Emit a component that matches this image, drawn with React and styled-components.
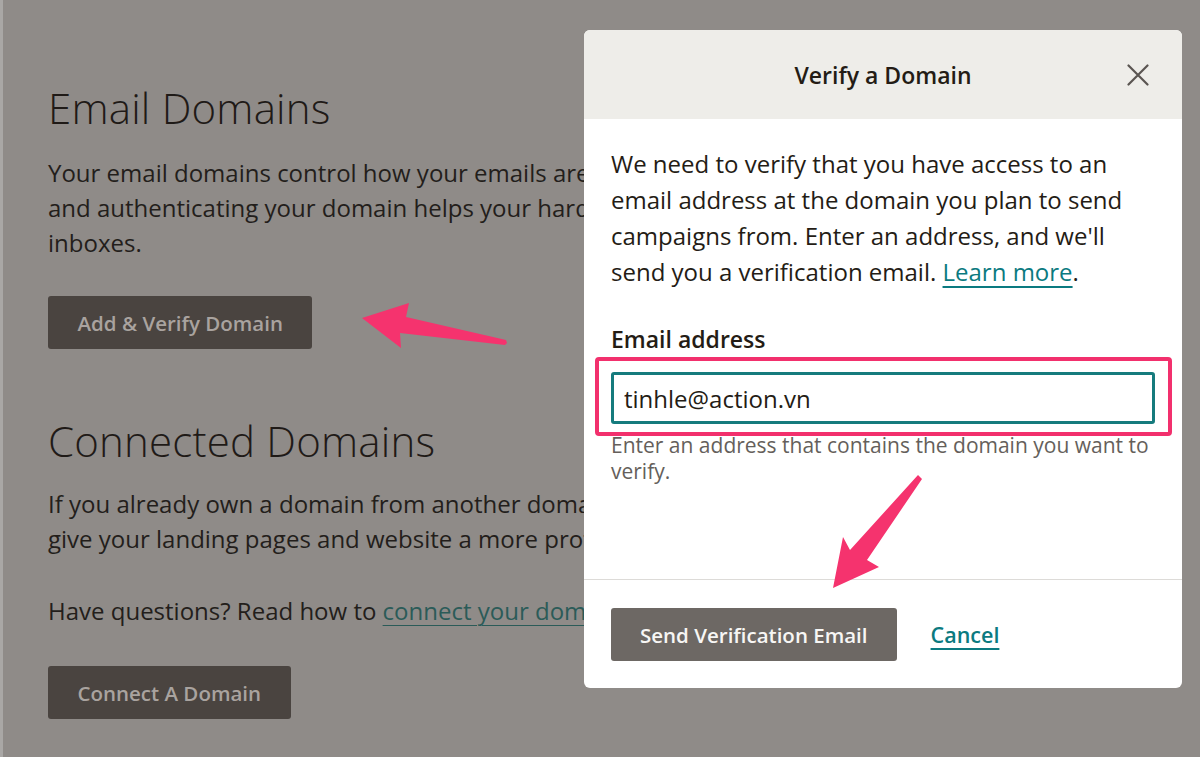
import React from 'react'
import styled, { createGlobalStyle } from 'styled-components'

const GlobalStyle = createGlobalStyle`
  html, body {
    margin: 0;
    background: #8f8b88;
  }
  body {
    font-family: "Open Sans", "Liberation Sans", sans-serif;
    color: #221d1a;
  }
  * { box-sizing: border-box; }
`

const Page = styled.div`
  position: relative;
  width: 1200px;
  height: 757px;
  overflow: hidden;
  background: #8f8b88;
  border-left: 3px solid #a9a7a5;
`

const Content = styled.main`
  padding: 83px 0 0 45px;
`

const Heading = styled.h2`
  margin: ${(p) => p.$top || 0}px 0 0;
  font-size: 42px;
  font-weight: 300;
  line-height: 50px;
  letter-spacing: 0.2px;
  color: #1f1a17;
`

const Text = styled.p`
  margin: ${(p) => p.$top || 0}px 0 0;
  font-size: 24px;
  line-height: 35px;
  white-space: nowrap;
  color: #231e1b;
`

const DimLink = styled.a`
  color: #2b5b58;
  text-decoration: underline;
  text-decoration-thickness: 1px;
  text-underline-offset: 5px;
`

const DimButton = styled.button`
  display: block;
  margin-top: ${(p) => p.$top}px;
  height: 53px;
  padding: 0 29.5px;
  border: 0;
  border-radius: 3px;
  background: #4a4440;
  color: #a9a39f;
  font-family: inherit;
  font-size: 20.5px;
  font-weight: 600;
`

const Dialog = styled.section`
  position: absolute;
  top: 30px;
  left: 581px;
  width: 598px;
  height: 658px;
  display: flex;
  flex-direction: column;
  background: #fff;
  border-radius: 6px;
  overflow: hidden;
`

const DialogHeader = styled.header`
  display: grid;
  grid-template-columns: 1fr auto 1fr;
  align-items: center;
  height: 89px;
  background: #eeede9;
`

const DialogTitle = styled.h3`
  grid-column: 2;
  margin: 0;
  font-size: 23px;
  font-weight: 600;
  color: #241c15;
`

const CloseButton = styled.button`
  grid-column: 3;
  justify-self: end;
  display: flex;
  margin-right: 33px;
  padding: 0;
  border: 0;
  background: none;
`

const DialogBody = styled.div`
  flex: 1;
  padding: 27px 27px 0;
`

const Intro = styled.p`
  margin: 0;
  font-size: 24px;
  line-height: 36px;
  color: #241c15;
`

const Link = styled.a`
  color: #0b7a80;
  text-decoration: underline;
  text-decoration-thickness: 1.5px;
  text-underline-offset: 5px;
`

const Label = styled.label`
  display: block;
  margin-top: 34px;
  font-size: 23px;
  font-weight: 600;
  line-height: 30px;
  color: #241c15;
`

const InputWrap = styled.div`
  position: relative;
  margin-top: 18px;
`

const Highlight = styled.span`
  position: absolute;
  top: -15px;
  left: -16px;
  right: -17px;
  bottom: -12px;
  border: 4px solid #f2306d;
  border-radius: 4px;
  pointer-events: none;
`

const Input = styled.input`
  display: block;
  width: 100%;
  height: 52px;
  padding: 0 10px;
  border: 3px solid #157b7d;
  border-radius: 3px;
  font-family: inherit;
  font-size: 24px;
  color: #241c15;
  outline: none;
`

const Help = styled.p`
  margin: 8px 0 0;
  font-size: 21px;
  line-height: 26px;
  color: #655f5b;
`

const DialogFooter = styled.footer`
  display: flex;
  align-items: center;
  gap: 34px;
  padding: 28px 27px 27px;
  border-top: 1px solid #dddbd8;
`

const PrimaryButton = styled.button`
  height: 53px;
  padding: 0 29px;
  border: 0;
  border-radius: 3px;
  background: #6d6864;
  color: #f7f6f4;
  font-family: inherit;
  font-size: 20.5px;
  font-weight: 600;
`

const CancelLink = styled.a`
  color: #0b7a80;
  font-size: 21.5px;
  font-weight: 600;
  text-decoration: underline;
  text-decoration-thickness: 1.5px;
  text-underline-offset: 5px;
`

const Arrows = styled.svg`
  position: absolute;
  top: 0;
  left: -3px;
  pointer-events: none;
`

const CloseIcon = () => (
  <svg width="22" height="22" viewBox="0 0 22 22">
    <path d="M1.5 1.5 L20.5 20.5 M20.5 1.5 L1.5 20.5" stroke="#5a5551" strokeWidth="2.2" strokeLinecap="round" />
  </svg>
)

export default function App() {
  return (
    <>
      <GlobalStyle />
      <Page>
        <Content>
          <Heading>Email Domains</Heading>
          <Text $top={22}>
            Your email domains control how your emails are delivered to subscribers,
            <br />
            and authenticating your domain helps your hard work land in your subscribers'
            <br />
            inboxes.
          </Text>
          <DimButton $top={36}>Add &amp; Verify Domain</DimButton>

          <Heading $top={67}>Connected Domains</Heading>
          <Text $top={20}>
            If you already own a domain from another domain provider, you can connect it to
            <br />
            give your landing pages and website a more professional look.
          </Text>
          <Text $top={37}>
            Have questions? Read how to <DimLink>connect your domain</DimLink>.
          </Text>
          <DimButton $top={38}>Connect A Domain</DimButton>
        </Content>

        <Dialog>
          <DialogHeader>
            <DialogTitle>Verify a Domain</DialogTitle>
            <CloseButton aria-label="Close">
              <CloseIcon />
            </CloseButton>
          </DialogHeader>
          <DialogBody>
            <Intro>
              We need to verify that you have access to an email address at the domain you plan
              to send campaigns from. Enter an address, and we'll send you a verification
              email. <Link>Learn more</Link>.
            </Intro>
            <Label htmlFor="verify-email">Email address</Label>
            <InputWrap>
              <Input id="verify-email" defaultValue="tinhle@action.vn" />
              <Highlight />
            </InputWrap>
            <Help>Enter an address that contains the domain you want to verify.</Help>
          </DialogBody>
          <DialogFooter>
            <PrimaryButton>Send Verification Email</PrimaryButton>
            <CancelLink>Cancel</CancelLink>
          </DialogFooter>
        </Dialog>

        <Arrows width="1200" height="757" viewBox="0 0 1200 757">
          <g fill="#f5336e">
            <polygon points="362,318 409,303 406,317 506,340 507,343 505,345 400,333 401,348" />
            <polygon points="918,475 922,479 867,560 879,567 833,588 843,537 850,550" />
          </g>
        </Arrows>
      </Page>
    </>
  )
}
